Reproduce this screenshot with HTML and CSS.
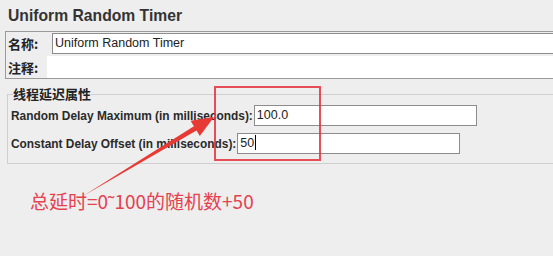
FILE: index.html
```html
<!DOCTYPE html>
<html lang="zh-CN">
<head>
<meta charset="utf-8">
<title>Uniform Random Timer</title>
<link rel="stylesheet" href="styles.css">
</head>
<body>
<div class="page">
  <h1 class="title">Uniform Random Timer</h1>
  <div class="namepanel">
    <div class="namerow">
      <span class="lbl">名称:</span>
      <div class="field namefield">Uniform Random Timer</div>
    </div>
    <div class="commentrow">
      <span class="lbl">注释:</span>
      <div class="comment"></div>
    </div>
  </div>
  <fieldset class="group">
    <legend class="legend">线程延迟属性</legend>
    <div class="row row1">
      <span class="plbl">Random Delay Maximum (in milliseconds):</span>
      <div class="field numfield">100.0</div>
    </div>
    <div class="row row2">
      <span class="plbl">Constant Delay Offset (in milliseconds):</span>
      <div class="field numfield">50<span class="caret"></span></div>
    </div>
  </fieldset>
  <p class="note">总延时=0<span class="tilde">˜</span>100的随机数+50</p>

  <div class="highlight"></div>
  <svg class="arrow" width="553" height="256" viewBox="0 0 553 256">
    <polygon points="83,196 196.5,130.5 199.8,136.1 214,117 190.6,120.7 193.9,126.3" fill="#e83a35"/>
  </svg>
</div>
</body>
</html>
```

FILE: styles.css
```css
html, body {
  margin: 0;
  padding: 0;
  background: #eeeeee;
  overflow: hidden;
}

.page {
  position: relative;
  width: 553px;
  height: 256px;
  overflow: hidden;
  font-family: "Liberation Sans", Arial, "Noto Sans CJK SC", sans-serif;
  color: #222;
}

.title {
  margin: 0;
  padding-left: 8px;
  height: 31px;
  line-height: 31px;
  font-size: 15.7px;
  font-weight: bold;
  color: #333;
}

.namepanel {
  margin-left: 5px;
  margin-right: -20px;
  border: 1px solid #9a9a9a;
  display: flex;
  flex-direction: column;
  gap: 2px;
  padding-top: 1px;
}

.namerow, .commentrow {
  display: flex;
  align-items: center;
}

.lbl {
  font-family: "Noto Sans CJK SC", sans-serif;
  font-weight: bold;
  font-size: 13px;
  color: #222;
  padding-left: 2px;
}

.namerow .lbl {
  width: 44px;
}

.commentrow .lbl {
  width: 39px;
}

.field {
  box-sizing: border-box;
  height: 21px;
  background: #fff;
  border: 1px solid #8c8c8c;
  font-size: 12.5px;
  line-height: 19px;
  padding-left: 2px;
  color: #222;
  white-space: nowrap;
}

.namefield {
  flex: 1;
}

.comment {
  flex: 1;
  height: 22px;
  background: #fff;
}

.group {
  margin: 8px -20px 0 7px;
  padding: 0 0 9px 3px;
  border: 1px solid #cfcfcf;
  min-width: 0;
}

.legend {
  margin-left: 2px;
  padding: 0;
  font-family: "Noto Sans CJK SC", sans-serif;
  font-weight: bold;
  font-size: 13px;
  line-height: 14px;
  color: #222;
}

.row {
  display: flex;
  align-items: center;
  gap: 1px;
}

.row1 {
  margin-top: 4px;
}

.row2 {
  margin-top: 7px;
}

.plbl {
  font-size: 11.9px;
  font-weight: bold;
  color: #2a2a2a;
  white-space: nowrap;
}

.numfield {
  width: 223px;
}

.caret {
  display: inline-block;
  width: 1px;
  height: 15px;
  background: #000;
  vertical-align: -3px;
  margin-left: 1px;
}

.note {
  margin: 24px 0 0 30px;
  font-family: "Noto Sans CJK SC", sans-serif;
  font-size: 19px;
  line-height: 26px;
  color: #e5414f;
}

.tilde {
  font-family: "Liberation Sans", sans-serif;
  font-size: 19px;
}

.highlight {
  position: absolute;
  left: 214px;
  top: 86px;
  width: 103px;
  height: 71px;
  border: 2px solid rgba(228, 48, 60, 0.85);
}

.arrow {
  position: absolute;
  left: 0;
  top: 0;
}
```
